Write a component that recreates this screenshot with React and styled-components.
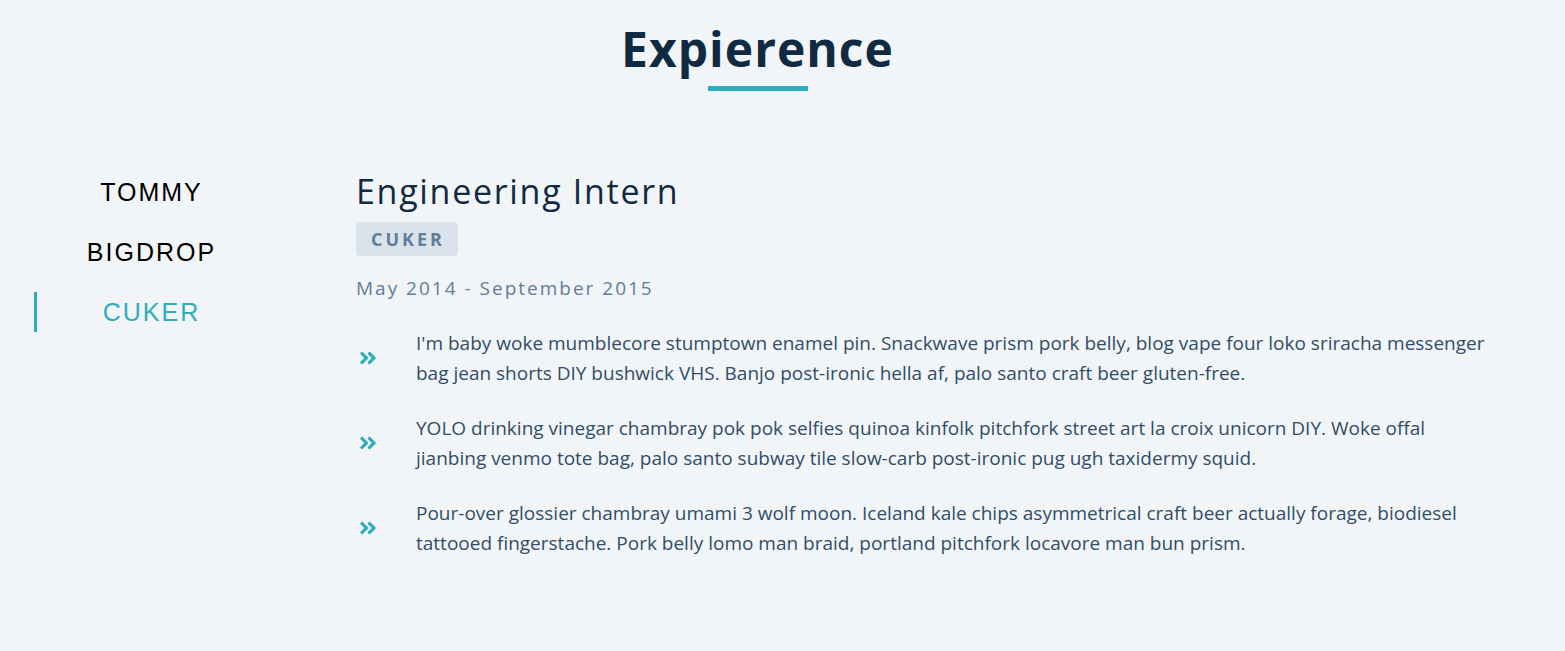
import React, { useState } from 'react'
import styled, { createGlobalStyle } from 'styled-components'
import { FaAngleDoubleRight } from 'react-icons/fa'

const jobs = [
  {
    id: 'tommy',
    company: 'TOMMY',
    title: 'Full Stack Web Developer',
    dates: 'December 2015 - Present',
    duties: [
      'Tote bag sartorial mlkshk air plant vinyl banjo lumbersexual poke leggings offal cold-pressed brunch neutra.',
      'Retro fanny pack lomo, chambray artisan unicorn meditation.',
      'Godard lo-fi fingerstache vaporware glossier.',
    ],
  },
  {
    id: 'bigdrop',
    company: 'BIGDROP',
    title: 'Front-End Engineer',
    dates: 'May 2015 - December 2015',
    duties: [
      'Hashtag drinking vinegar scenester mumblecore snackwave four dollar toast.',
      'Cardigan trust fund pour-over brooklyn.',
    ],
  },
  {
    id: 'cuker',
    company: 'CUKER',
    title: 'Engineering Intern',
    dates: 'May 2014 - September 2015',
    duties: [
      "I'm baby woke mumblecore stumptown enamel pin. Snackwave prism pork belly, blog vape four loko sriracha messenger bag jean shorts DIY bushwick VHS. Banjo post-ironic hella af, palo santo craft beer gluten-free.",
      'YOLO drinking vinegar chambray pok pok selfies quinoa kinfolk pitchfork street art la croix unicorn DIY. Woke offal jianbing venmo tote bag, palo santo subway tile slow-carb post-ironic pug ugh taxidermy squid.',
      'Pour-over glossier chambray umami 3 wolf moon. Iceland kale chips asymmetrical craft beer actually forage, biodiesel tattooed fingerstache. Pork belly lomo man braid, portland pitchfork locavore man bun prism.',
    ],
  },
]

const App = () => {
  const [value, setValue] = useState(2)
  const job = jobs[value]

  return (
    <>
      <GlobalStyle />
      <Section>
        <Title>
          <h2>Expierence</h2>
          <Underline />
        </Title>
        <JobsCenter>
          <BtnContainer>
            {jobs.map((item, index) => (
              <JobBtn
                key={item.id}
                $active={index === value}
                onClick={() => setValue(index)}
              >
                {item.company}
              </JobBtn>
            ))}
          </BtnContainer>
          <JobInfo>
            <JobTitle>{job.title}</JobTitle>
            <Company>{job.company}</Company>
            <JobDate>{job.dates}</JobDate>
            {job.duties.map((duty, i) => (
              <JobDesc key={`duty${i}`}>
                <DescIcon>
                  <FaAngleDoubleRight />
                </DescIcon>
                <p>{duty}</p>
              </JobDesc>
            ))}
          </JobInfo>
        </JobsCenter>
      </Section>
    </>
  )
}

export default App

const GlobalStyle = createGlobalStyle`
  * {
    box-sizing: border-box;
    margin: 0;
    padding: 0;
  }
  body {
    background: #f1f5f8;
    color: #102a42;
    font-family: "Open Sans", "Noto Sans", sans-serif;
  }
`

const Section = styled.section`
  padding: 19px 0 60px;
`

const Title = styled.div`
  display: flex;
  flex-direction: column;
  align-items: center;
  margin-bottom: 80px;
  padding-right: 50px;

  h2 {
    font-size: 48px;
    line-height: 1.25;
    font-weight: 700;
    letter-spacing: 1px;
    color: #102a42;
  }
`

const Underline = styled.div`
  width: 100px;
  height: 5px;
  margin-top: 7px;
  background: #2caeba;
`

const JobsCenter = styled.div`
  display: grid;
  grid-template-columns: 232px 1fr;
  column-gap: 90px;
  padding: 0 72px 0 34px;
`

const BtnContainer = styled.div`
  display: flex;
  flex-direction: column;
  gap: 20px;
  padding-top: 1px;
`

const JobBtn = styled.button`
  height: 40px;
  background: transparent;
  border: none;
  border-left: 3px solid ${({ $active }) => ($active ? '#2caeba' : 'transparent')};
  color: ${({ $active }) => ($active ? '#2caeba' : '#000')};
  font-family: "Liberation Sans", Arial, sans-serif;
  font-size: 25px;
  letter-spacing: 2px;
  text-align: center;
  cursor: pointer;
`

const JobInfo = styled.article`
  display: flex;
  flex-direction: column;
  align-items: flex-start;
`

const JobTitle = styled.h3`
  font-size: 34px;
  line-height: 1.2;
  font-weight: 400;
  letter-spacing: 1.7px;
  color: #102a42;
`

const Company = styled.h4`
  margin-top: 10px;
  height: 34px;
  display: flex;
  align-items: center;
  padding: 0 13px 0 15px;
  background: #dae2ec;
  border-radius: 4px;
  color: #617d98;
  font-size: 18px;
  font-weight: 700;
  letter-spacing: 3px;
`

const JobDate = styled.p`
  margin-top: 19px;
  font-size: 19px;
  letter-spacing: 2px;
  color: #617d98;
`

const JobDesc = styled.div`
  display: grid;
  grid-template-columns: 60px 1fr;
  align-items: center;
  margin-top: 27px;

  p {
    font-size: 19px;
    line-height: 30.5px;
    color: #324d67;
  }

  & + & {
    margin-top: 24px;
  }
`

const DescIcon = styled.span`
  display: flex;
  align-items: center;
  padding-left: 2px;
  color: #2caeba;
  font-size: 20px;
`
